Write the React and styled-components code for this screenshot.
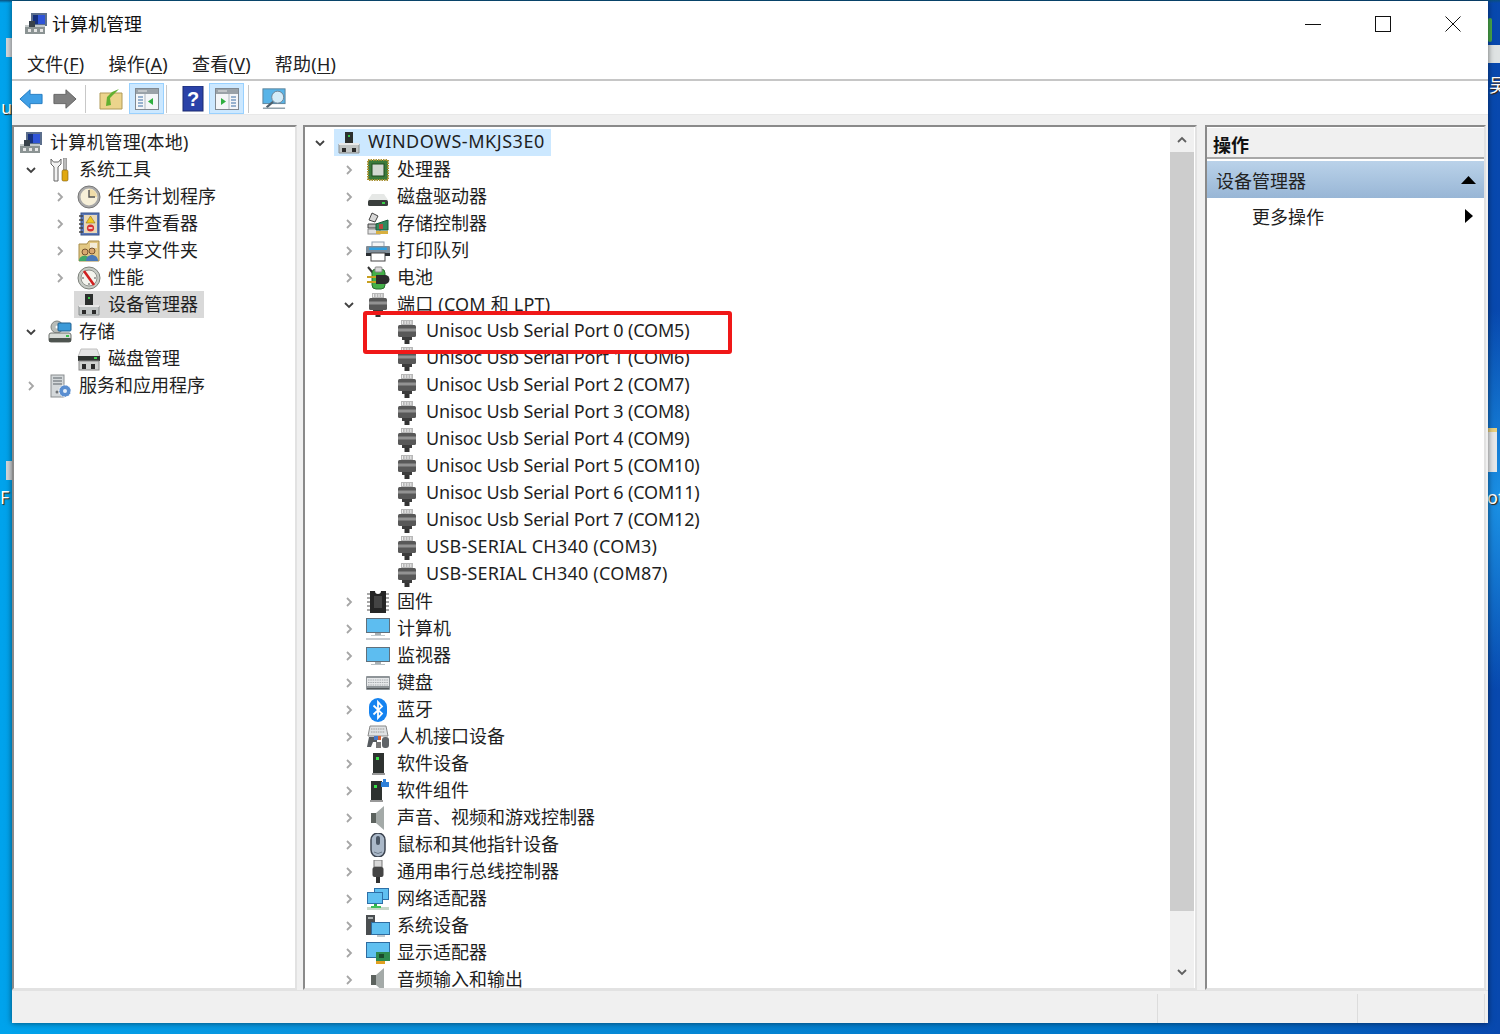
import React from 'react'
import styled, { createGlobalStyle } from 'styled-components'

const Global = createGlobalStyle`
  html, body { margin: 0; height: 100%; overflow: hidden; }
  #root { height: 100%; }
  * { box-sizing: border-box; }
`

const Desktop = styled.div`
  position: relative;
  width: 1500px;
  height: 1034px;
  padding: 1px 0 0 12px;
  overflow: hidden;
  font-family: "Noto Sans", "Noto Sans CJK SC", sans-serif;
  font-size: 18px;
  color: #1f1f1f;
  background:
    radial-gradient(circle 190px at 1510px 500px, #1b93e6 0, rgba(27, 147, 230, 0) 100%),
    linear-gradient(180deg, #0c4f7c 0, rgba(12, 79, 124, 0) 3px),
    linear-gradient(90deg, #00a3ec 0, #0a92dc 330px, #0079cb 1100px, #0848ae 1500px);
`

// bits of desktop icons that stick out from behind the window
const DeskTile = styled.div`
  position: absolute;
  left: ${p => p.$x}px;
  top: ${p => p.$y}px;
  width: ${p => p.$w}px;
  height: ${p => p.$h}px;
  background: ${p => p.$bg};
  border-radius: ${p => p.$round || 0}px;
`

const DeskLabel = styled.span`
  position: absolute;
  left: ${p => p.$x}px;
  top: ${p => p.$y}px;
  line-height: 20px;
  font-size: 18px;
  color: #fff;
  text-shadow: 1px 1px 1px #402000;
`

const Window = styled.div`
  position: relative;
  width: 1476px;
  height: 1022px;
  display: flex;
  flex-direction: column;
  background: #f0f0f0;
  box-shadow: 0 0 6px rgba(0, 0, 0, 0.55);
`

const TitleBar = styled.div`
  height: 45px;
  flex: none;
  display: flex;
  align-items: center;
  padding-left: 12px;
  background: #fff;
`

const TitleText = styled.span`
  margin-left: 4px;
  padding-bottom: 2px;
  flex: 1;
  color: #111;
`

const WinButton = styled.div`
  width: 70px;
  height: 45px;
  display: flex;
  align-items: center;
  justify-content: center;
`

const MenuBar = styled.div`
  height: 35px;
  flex: none;
  display: flex;
  align-items: center;
  gap: 24px;
  padding-left: 15px;
  background: #fff;
  border-bottom: 2px solid #c6c6c6;
`

const MenuItem = styled.span`
  color: #222;
  letter-spacing: 0.25px;
  u { text-underline-offset: 2px; }
`

const ToolBar = styled.div`
  height: 34px;
  flex: none;
  display: flex;
  align-items: flex-end;
  padding-left: 6px;
  background: #fff;
  border-bottom: 1px solid #e8e8e8;
`

const ToolButton = styled.div`
  width: ${p => p.$w || 26}px;
  height: 31px;
  margin-right: ${p => p.$mr || 0}px;
  display: flex;
  align-items: center;
  justify-content: center;
  background: ${p => (p.$active ? '#cce8ff' : 'transparent')};
  border: 1px solid ${p => (p.$active ? '#99d1ff' : 'transparent')};
`

const ToolSep = styled.div`
  width: 1px;
  height: 28px;
  margin: 0 ${p => p.$after}px 1px ${p => p.$before}px;
  background: #c8c8c8;
`

const Panes = styled.div`
  flex: 1;
  min-height: 0;
  display: flex;
  margin-top: 10px;
`

const Pane = styled.div`
  width: ${p => p.$w}px;
  margin-right: ${p => p.$gap || 0}px;
  display: flex;
  background: #fff;
  border-top: 2px solid #8a8a8a;
  border-left: 2px solid #8a8a8a;
  border-right: 2px solid #e2e2e2;
  border-bottom: 2px solid #e2e2e2;
  position: relative;
`

const Tree = styled.div`
  flex: 1;
  min-width: 0;
  padding-top: 2px;
  overflow: hidden;
`

const Row = styled.div`
  height: 27px;
  display: flex;
  align-items: center;
  padding-left: ${p => p.$indent}px;
  white-space: nowrap;
`

const Chevron = styled.div`
  width: 14px;
  height: 14px;
  margin-right: 10px;
  flex: none;
  display: flex;
  align-items: center;
  justify-content: center;
`

const RowBody = styled.div`
  height: 27px;
  display: flex;
  align-items: center;
  gap: 7px;
  margin-left: -3px;
  padding: 0 6px 0 3px;
  background: ${p => p.$selected || 'transparent'};
`

const RowLabel = styled.span`
  padding-bottom: 4px;
  letter-spacing: ${p => p.$track}px;
`

const IconSlot = styled.div`
  width: 24px;
  height: 24px;
  flex: none;
`

const ScrollBar = styled.div`
  width: 24px;
  margin-right: 1px;
  flex: none;
  display: flex;
  flex-direction: column;
  background: #f0f0f0;
`

const ScrollArrow = styled.div`
  height: ${p => p.$h}px;
  flex: none;
  display: flex;
  align-items: center;
  justify-content: center;
`

const ScrollThumb = styled.div`
  height: 759px;
  flex: none;
  background: #cdcdcd;
`

const ScrollRest = styled.div`
  flex: 1;
`

const Marker = styled.div`
  position: absolute;
  left: 58px;
  top: 184px;
  width: 369px;
  height: 43px;
  border: 4px solid #f01818;
  border-radius: 3px;
  pointer-events: none;
`

const ActionsColumn = styled.div`
  flex: 1;
  display: flex;
  flex-direction: column;
`

const ActionsHead = styled.div`
  height: 31px;
  margin-top: 1px;
  display: flex;
  align-items: center;
  padding: 2px 0 0 6px;
  font-weight: 700;
  color: #111;
  background: #f0f0f0;
  border-bottom: 2px solid #a8a8a8;
`

const ActionsGroup = styled.div`
  height: 37px;
  margin-top: 2px;
  display: flex;
  align-items: center;
  justify-content: space-between;
  padding: 0 8px 0 9px;
  color: #222;
  background: linear-gradient(180deg, #bad2e9 0, #98b6d6 100%);
`

const ActionsItem = styled.div`
  height: 36px;
  display: flex;
  align-items: center;
  justify-content: space-between;
  padding: 0 11px 0 45px;
`

const StatusBar = styled.div`
  height: 33px;
  flex: none;
  display: flex;
  justify-content: flex-end;
  background: #f0f0f0;
  border-top: 1px solid #e2e2e2;
  padding: 3px 3px 0 0;
`

const StatusCell = styled.div`
  width: ${p => p.$w}px;
  border-left: 1px solid #dcdcdc;
  border-right: ${p => (p.$last ? '1px solid #dcdcdc' : 'none')};
`

const Svg = ({ children, size = 24 }) => (
  <svg width={size} height={size} viewBox="0 0 24 24">{children}</svg>
)

// tree and toolbar icons, all on a 24 unit grid
const icons = {
  mgmt: <>
    <rect x="7" y="1" width="16" height="13" fill="#5c6f8c" />
    <rect x="9" y="3" width="12" height="9" fill="#2f54d8" />
    <rect x="9" y="3" width="5" height="9" fill="#15307e" />
    <rect x="1" y="13" width="20" height="9" fill="#8b9393" />
    <rect x="1" y="13" width="20" height="2" fill="#c4caca" />
    <rect x="5" y="9" width="6" height="6" fill="#39424a" />
    <rect x="4" y="17" width="3" height="3" fill="#e6e6e6" />
    <rect x="10" y="17" width="3" height="3" fill="#e6e6e6" />
    <rect x="16" y="17" width="3" height="3" fill="#e6e6e6" />
  </>,
  tools: <>
    <path d="M3 1 v5 l3 3 v14 h4 V9 l3-3 V1 l-2.5 3 h-5z" fill="#f2f2f2" stroke="#666" />
    <rect x="15.5" y="0" width="3" height="12" fill="#bbb" stroke="#777" strokeWidth=".6" />
    <rect x="14" y="12" width="6" height="11" rx="1.5" fill="#e0a810" stroke="#7a5a10" strokeWidth=".6" />
  </>,
  clock: <>
    <circle cx="12" cy="12" r="11" fill="#a8a8a8" stroke="#777" />
    <circle cx="12" cy="12" r="8.5" fill="#f6efd8" />
    <path d="M12 12 V4 A8 8 0 0 1 20 12z" fill="#efdca8" />
    <path d="M12 5 V12 H18" fill="none" stroke="#555" strokeWidth="1.4" />
  </>,
  log: <>
    <rect x="4" y="1" width="18" height="22" fill="#5a78b8" stroke="#34508a" />
    <rect x="7" y="3" width="13" height="18" fill="#e8d8b8" />
    <path d="M2 4h4M2 8h4M2 12h4M2 16h4M2 20h4" stroke="#444" strokeWidth="1.4" />
    <path d="M13.5 4 L18 11 H9z" fill="#f0c820" stroke="#806010" strokeWidth=".5" />
    <circle cx="13.5" cy="16" r="3.6" fill="#d83030" />
    <rect x="11.5" y="15.3" width="4" height="1.4" fill="#fff" />
  </>,
  share: <>
    <path d="M2 5 h8 l2-3 h10 v20 H2z" fill="#e3c884" stroke="#a88c48" />
    <rect x="13" y="4" width="7" height="5" fill="#f4ecd8" />
    <circle cx="8" cy="13" r="3" fill="#d8a870" stroke="#5a3a20" strokeWidth=".8" />
    <path d="M2 22 c0-7 11-7 11 0z" fill="#40a868" />
    <circle cx="15" cy="12" r="3" fill="#d8a870" stroke="#5a3a20" strokeWidth=".8" />
    <path d="M9 22 c0-8 12-8 12 0z" fill="#4878b8" />
  </>,
  perf: <>
    <circle cx="12" cy="12" r="11" fill="#c6cac4" stroke="#7c807a" />
    <circle cx="12" cy="12" r="8" fill="#f4f4ee" stroke="#90948e" />
    <path d="M7 5 L17 19" stroke="#d02020" strokeWidth="2.6" />
    <path d="M5 12h2M17 12h2M12 19v-2" stroke="#555" strokeWidth="1" />
  </>,
  device: <>
    <rect x="8" y="1" width="8" height="11" fill="#2c2f2e" />
    <rect x="11" y="4" width="2" height="2" fill="#38c848" />
    <path d="M2 13 h20 v9 H2z" fill="#c0c4c4" stroke="#8a8e8e" />
    <rect x="2" y="12" width="20" height="2" fill="#e8e8e8" />
    <rect x="5" y="17" width="4" height="4" fill="#2a2a2a" />
    <rect x="15" y="17" width="4" height="4" fill="#2a2a2a" />
  </>,
  storage: <>
    <circle cx="9" cy="7" r="6" fill="#b8bcb8" stroke="#808480" />
    <circle cx="9" cy="7" r="1.5" fill="#fff" />
    <rect x="10" y="3" width="13" height="8" rx="1" fill="#3c9ad8" stroke="#206090" />
    <rect x="1" y="13" width="22" height="9" rx="2" fill="#d8dcd8" stroke="#6c706c" />
    <rect x="1" y="18" width="22" height="4" rx="1" fill="#4e5450" />
    <rect x="18" y="15" width="3" height="2" fill="#40c050" />
  </>,
  diskmgmt: <>
    <path d="M4 2 h16 l3 8 H1z" fill="#e4e4e4" stroke="#c0c0c0" />
    <rect x="1" y="9" width="22" height="5" fill="#2e3230" />
    <rect x="17" y="10" width="3" height="2" fill="#40d050" />
    <rect x="2" y="14" width="20" height="9" fill="#d0d2d0" stroke="#888" />
    <rect x="5" y="17" width="4" height="5" fill="#2a2a2a" />
    <rect x="14" y="17" width="4" height="5" fill="#2a2a2a" />
  </>,
  services: <>
    <rect x="3" y="1" width="13" height="22" fill="#d4d8da" stroke="#8a8e90" />
    <path d="M5 4h9M5 7h9M5 10h9" stroke="#5a6268" strokeWidth="1.2" />
    <circle cx="9" cy="18" r="1.5" fill="#707478" />
    <circle cx="17" cy="17" r="6" fill="#5a8ed0" stroke="#fff" strokeWidth="1" strokeDasharray="2 1" />
    <circle cx="17" cy="17" r="2" fill="#e4eef8" />
  </>,
  cpu: <>
    <rect x="2" y="2" width="20" height="20" fill="#3c7a3c" stroke="#a89030" strokeDasharray="1.5 1" strokeWidth="2" />
    <rect x="6" y="6" width="12" height="12" fill="#d4d8d2" stroke="#1e4a1e" />
  </>,
  disk: <>
    <path d="M6 9 h12 l4 6 H2z" fill="#e6e8e6" />
    <rect x="2" y="15" width="20" height="6" rx="1.5" fill="#3a3e3c" />
    <rect x="16" y="17" width="3" height="2" fill="#38d048" />
  </>,
  ctrl: <>
    <path d="M6 1 L12 4 L9 10 L3 8z" fill="#d8d8d8" stroke="#444" />
    <path d="M2 12 h9 v4 H2z" fill="#b8b8b8" stroke="#444" />
    <rect x="2" y="17" width="12" height="5" fill="#e0e0e0" stroke="#888" />
    <path d="M10 12 l12-4 v10 H10z" fill="#2e8a5e" stroke="#1a5a3a" />
    <rect x="13" y="12" width="4" height="5" fill="#b8483c" />
    <rect x="10" y="19" width="12" height="3" fill="#d8b040" />
  </>,
  printer: <>
    <rect x="6" y="3" width="12" height="5" fill="#f4f4f4" stroke="#90a0b0" />
    <rect x="0" y="7" width="24" height="10" rx="1" fill="#7e8c98" />
    <rect x="3" y="8.5" width="18" height="2.5" fill="#30a0e0" />
    <rect x="5" y="14" width="14" height="8" fill="#fff" stroke="#444" />
    <rect x="0" y="14" width="5" height="3" fill="#2a2e32" />
    <rect x="19" y="14" width="5" height="3" fill="#2a2e32" />
  </>,
  battery: <>
    <path d="M2 1 L7 7" stroke="#333" strokeWidth="2" />
    <rect x="6" y="3" width="13" height="20" rx="4" fill="#44b048" stroke="#2a6e2e" />
    <rect x="9" y="1" width="7" height="5" rx="1" fill="#d8d8d8" stroke="#888" />
    <path d="M10 9 h9 a4 4 0 0 1 0 9 h-9z" fill="#2c2c2c" />
    <path d="M1 11 h9 M1 16 h9" stroke="#c8a020" strokeWidth="2" />
  </>,
  port: <>
    <rect x="6" y="0" width="12" height="5" fill="#b8b8b8" />
    <path d="M7.5 1v3M10.2 1v3M13 1v3M15.8 1v3" stroke="#f0f0f0" strokeWidth="1" />
    <rect x="3" y="5" width="18" height="12" rx="1.5" fill="#585858" />
    <rect x="3" y="8.5" width="18" height="3" fill="#929292" />
    <rect x="7" y="17" width="10" height="3" fill="#3c3c3c" />
    <rect x="9.5" y="20" width="5" height="4" fill="#333" />
  </>,
  firmware: <>
    <path d="M4 1 h5 a3 3 0 0 0 6 0 h5 v22 H4z" fill="#252525" />
    <path d="M1 4h3M1 8h3M1 12h3M1 16h3M1 20h3M20 4h3M20 8h3M20 12h3M20 16h3M20 20h3" stroke="#8a8a8a" strokeWidth="1.4" />
    <rect x="8" y="6" width="8" height="12" fill="#444" />
  </>,
  computer: <>
    <rect x="0" y="1" width="24" height="15" fill="#60707c" />
    <rect x="1" y="2" width="22" height="13" fill="#5dbdf0" />
    <rect x="9" y="16" width="6" height="2" fill="#a8b0b4" />
    <rect x="5" y="18" width="14" height="1" fill="#c0c8cc" />
    <rect x="0" y="21" width="24" height="2" fill="#c8ccd0" />
  </>,
  monitor: <>
    <rect x="0" y="3" width="24" height="15" fill="#60707c" />
    <rect x="1" y="4" width="22" height="13" fill="#5dbdf0" />
    <rect x="9" y="18" width="6" height="2" fill="#a8b0b4" />
    <rect x="5" y="20" width="14" height="1" fill="#b8c0c4" />
  </>,
  keyboard: <>
    <rect x="0" y="5" width="24" height="14" rx="1" fill="#8e9498" />
    <rect x="1" y="7" width="22" height="8" fill="#e6e8ea" />
    <path d="M2 9h20M2 11.5h20M2 14h20" stroke="#a8acb0" strokeWidth="1" strokeDasharray="1.5 .8" />
    <rect x="1" y="17" width="22" height="1" fill="#55595c" />
  </>,
  bluetooth: <>
    <rect x="3" y="0" width="18" height="24" rx="9" fill="#1583f0" />
    <path d="M7.5 7.5 L16 15.5 L12 20 V4 L16 8.5 L7.5 16.5" fill="none" stroke="#fff" strokeWidth="1.8" />
  </>,
  hid: <>
    <path d="M4 1 h16 l2 10 H2z" fill="#dfe2e4" stroke="#888" />
    <path d="M5 4h14M5 7h14" stroke="#999" strokeDasharray="1.5 .8" />
    <path d="M1 22 l2-10 h8 v5 h-4 l-2 5z" fill="#555a5e" />
    <rect x="8" y="11" width="5" height="4" fill="#4878c8" />
    <rect x="12" y="11" width="3" height="4" fill="#d86030" />
    <rect x="16" y="12" width="7" height="11" rx="3" fill="#606468" />
    <rect x="10" y="17" width="5" height="6" fill="#777" />
  </>,
  software: <>
    <rect x="7" y="1" width="11" height="21" fill="#2e3230" />
    <rect x="6" y="21" width="13" height="2" fill="#999" />
    <rect x="10" y="5" width="3" height="3" fill="#38e048" />
  </>,
  component: <>
    <rect x="5" y="2" width="11" height="20" fill="#2e3230" />
    <rect x="4" y="21" width="13" height="2" fill="#999" />
    <rect x="8" y="6" width="3" height="3" fill="#38e048" />
    <path d="M17 0 h3 v3 h3 v5 h-8 V3 h2z" fill="#2f80d8" />
  </>,
  speaker: <>
    <path d="M5 7 h5 l8-7 v24 l-8-7 H5z" fill="#a4aaa8" />
    <path d="M5 7 h5 v10 H5z" fill="#5c625e" />
  </>,
  mouse: <>
    <rect x="5" y="0" width="14" height="24" rx="7" fill="#aab8c8" stroke="#3c4450" strokeWidth="1.5" />
    <rect x="10" y="3" width="4" height="9" rx="2" fill="#4a5664" />
    <path d="M8 19 q4 3 8 0" stroke="#6a7888" fill="none" />
  </>,
  usb: <>
    <rect x="8" y="0" width="8" height="7" fill="#d8d8d8" stroke="#777" />
    <rect x="6.5" y="7" width="11" height="10" rx="2" fill="#454545" />
    <rect x="10" y="17" width="4" height="6" fill="#303030" />
  </>,
  network: <>
    <rect x="8" y="1" width="15" height="12" fill="#2e70a8" />
    <rect x="9" y="2" width="13" height="10" fill="#60c0f0" />
    <rect x="1" y="5" width="16" height="12" fill="#2e70a8" />
    <rect x="2" y="6" width="14" height="10" fill="#60c0f0" />
    <rect x="8" y="17" width="3" height="3" fill="#30b048" />
    <rect x="1" y="20" width="22" height="3" fill="#c8d8c8" />
    <rect x="5" y="19" width="10" height="2" fill="#40c058" />
  </>,
  system: <>
    <rect x="0" y="1" width="9" height="20" fill="#4a4e50" />
    <rect x="2" y="3" width="5" height="2" fill="#aab0b0" />
    <rect x="5" y="8" width="19" height="13" fill="#2e6ca0" />
    <rect x="6" y="9" width="17" height="11" fill="#60c0f0" />
    <rect x="11" y="21" width="8" height="2" fill="#c0c8cc" />
  </>,
  display: <>
    <rect x="0" y="1" width="24" height="16" fill="#2e6ca0" />
    <rect x="1" y="2" width="22" height="14" fill="#60c0f0" />
    <rect x="10" y="11" width="14" height="9" fill="#2e8a4e" />
    <rect x="13" y="13" width="5" height="4" fill="#1a4a2a" />
    <rect x="10" y="20" width="9" height="3" fill="#e0a020" />
  </>
}

const NavArrow = ({ color, edge, flip }) => (
  <svg width="26" height="22" viewBox="0 0 26 22">
    <path
      d="M1 11 L12 1 V6 H25 V16 H12 V21z"
      fill={color}
      stroke={edge}
      transform={flip ? 'translate(26 0) scale(-1 1)' : undefined}
    />
  </svg>
)

const PanelGlyph = ({ right }) => (
  <svg width="24" height="22" viewBox="0 0 24 22">
    <rect x="0.5" y="0.5" width="23" height="21" fill="#f4f6f8" stroke="#808890" />
    <rect x="1" y="1" width="22" height="5" fill="#9aa2a8" />
    <path d="M3 3h9" stroke="#e8e8e8" />
    {right
      ? <path d="M6 10 v7 l5-3.5z" fill="#30b040" />
      : <path d="M18 10 v7 l-5-3.5z" fill="#30b040" />}
    <path d={right ? 'M16 9h5M16 12h5M16 15h5M16 18h5' : 'M3 9h5M3 12h5M3 15h5M3 18h5'} stroke="#7a9cc0" strokeWidth="1.4" />
    <path d={right ? 'M14 6v15' : 'M10 6v15'} stroke="#b0b8c0" />
  </svg>
)

const Caret = ({ open }) => (
  <svg width="12" height="12" viewBox="0 0 12 12">
    {open
      ? <path d="M2 4 L6 8 L10 4" fill="none" stroke="#404040" strokeWidth="1.8" />
      : <path d="M4 2 L8 6 L4 10" fill="none" stroke="#a6a6a6" strokeWidth="1.8" />}
  </svg>
)

// Noto's latin runs a bit off the console font, so labels get a little tracking
const trackFor = label => {
  if (label.startsWith('Unisoc')) return -0.17
  if (label.startsWith('USB-')) return 0.22
  if (label.startsWith('WINDOWS')) return 0.53
  return label.includes('(') ? 0.2 : 0
}

const TreeRow = ({ row, base, selected }) => {
  const [level, icon, label, state, mark] = row
  const flat = level === 0 && base === 5
  return (
    <Row $indent={flat ? 5 : base + 29 * (level - (base === 10 ? 1 : 0))}>
      {!flat && (
        <Chevron>{state && <Caret open={state === 'open'} />}</Chevron>
      )}
      <RowBody $selected={mark ? selected : undefined}>
        <IconSlot><Svg>{icons[icon]}</Svg></IconSlot>
        <RowLabel $track={trackFor(label)}>{label}</RowLabel>
      </RowBody>
    </Row>
  )
}

const leftRows = [
  [0, 'mgmt', '计算机管理(本地)'],
  [1, 'tools', '系统工具', 'open'],
  [2, 'clock', '任务计划程序', 'closed'],
  [2, 'log', '事件查看器', 'closed'],
  [2, 'share', '共享文件夹', 'closed'],
  [2, 'perf', '性能', 'closed'],
  [2, 'device', '设备管理器', null, true],
  [1, 'storage', '存储', 'open'],
  [2, 'diskmgmt', '磁盘管理'],
  [1, 'services', '服务和应用程序', 'closed']
]

const ports = [
  'Unisoc Usb Serial Port 0 (COM5)',
  'Unisoc Usb Serial Port 1 (COM6)',
  'Unisoc Usb Serial Port 2 (COM7)',
  'Unisoc Usb Serial Port 3 (COM8)',
  'Unisoc Usb Serial Port 4 (COM9)',
  'Unisoc Usb Serial Port 5 (COM10)',
  'Unisoc Usb Serial Port 6 (COM11)',
  'Unisoc Usb Serial Port 7 (COM12)',
  'USB-SERIAL CH340 (COM3)',
  'USB-SERIAL CH340 (COM87)'
]

const midRows = [
  [0, 'device', 'WINDOWS-MKJS3E0', 'open', true],
  [1, 'cpu', '处理器', 'closed'],
  [1, 'disk', '磁盘驱动器', 'closed'],
  [1, 'ctrl', '存储控制器', 'closed'],
  [1, 'printer', '打印队列', 'closed'],
  [1, 'battery', '电池', 'closed'],
  [1, 'port', '端口 (COM 和 LPT)', 'open'],
  ...ports.map(name => [2, 'port', name]),
  [1, 'firmware', '固件', 'closed'],
  [1, 'computer', '计算机', 'closed'],
  [1, 'monitor', '监视器', 'closed'],
  [1, 'keyboard', '键盘', 'closed'],
  [1, 'bluetooth', '蓝牙', 'closed'],
  [1, 'hid', '人机接口设备', 'closed'],
  [1, 'software', '软件设备', 'closed'],
  [1, 'component', '软件组件', 'closed'],
  [1, 'speaker', '声音、视频和游戏控制器', 'closed'],
  [1, 'mouse', '鼠标和其他指针设备', 'closed'],
  [1, 'usb', '通用串行总线控制器', 'closed'],
  [1, 'network', '网络适配器', 'closed'],
  [1, 'system', '系统设备', 'closed'],
  [1, 'display', '显示适配器', 'closed'],
  [1, 'speaker', '音频输入和输出', 'closed']
]

const menus = [['文件', 'F'], ['操作', 'A'], ['查看', 'V'], ['帮助', 'H']]

export default function App() {
  return (
    <Desktop>
      <Global />
      <DeskTile $x={6} $y={38} $w={6} $h={19} $bg="#d4d8dc" />
      <DeskTile $x={6} $y={461} $w={6} $h={19} $bg="#d4d8dc" />
      <DeskLabel $x={1} $y={97}>u</DeskLabel>
      <DeskLabel $x={0} $y={487}>F</DeskLabel>
      <DeskTile $x={1488} $y={18} $w={4} $h={24} $bg="#4aa84a" $round={2} />
      <DeskTile $x={1488} $y={45} $w={12} $h={18} $bg="#dfe3e3" />
      <DeskLabel $x={1489} $y={75}>吴</DeskLabel>
      <DeskTile $x={1488} $y={428} $w={9} $h={4} $bg="#e8d080" />
      <DeskTile $x={1488} $y={432} $w={9} $h={40} $bg="#e6e8ea" />
      <DeskLabel $x={1487} $y={487}>ot</DeskLabel>

      <Window>
        <TitleBar>
          <IconSlot><Svg>{icons.mgmt}</Svg></IconSlot>
          <TitleText>计算机管理</TitleText>
          <WinButton>
            <svg width="16" height="16"><path d="M0 8.5H16" stroke="#111" /></svg>
          </WinButton>
          <WinButton>
            <svg width="16" height="16"><rect x=".5" y=".5" width="15" height="15" fill="none" stroke="#111" /></svg>
          </WinButton>
          <WinButton>
            <svg width="16" height="16"><path d="M.5 .5L15.5 15.5M15.5 .5L.5 15.5" stroke="#111" /></svg>
          </WinButton>
        </TitleBar>

        <MenuBar>
          {menus.map(([name, key]) => (
            <MenuItem key={key}>{name}(<u>{key}</u>)</MenuItem>
          ))}
        </MenuBar>

        <ToolBar>
          <ToolButton $mr={8}><NavArrow color="#3f9fe6" edge="#1e78c0" /></ToolButton>
          <ToolButton><NavArrow color="#808080" edge="#606060" flip /></ToolButton>
          <ToolSep $before={7} $after={12} />
          <ToolButton $w={26} $mr={5}>
            <svg width="24" height="22" viewBox="0 0 24 22">
              <path d="M1 5 h22 v16 H1z" fill="#ecd48c" stroke="#b09a58" />
              <path d="M7 18 L8 9 L13 4 L20 1 L14 7 L11 10 L12 17z" fill="#62b030" />
            </svg>
          </ToolButton>
          <ToolButton $w={35} $active><PanelGlyph /></ToolButton>
          <ToolSep $before={2} $after={12} />
          <ToolButton $w={28} $mr={2}>
            <svg width="22" height="26" viewBox="0 0 22 26">
              <rect width="20" height="25" x="1" fill="#2a42a8" stroke="#1a2a70" />
              <text x="11" y="20" textAnchor="middle" fontFamily="Liberation Sans" fontWeight="700" fontSize="20" fill="#fff">?</text>
            </svg>
          </ToolButton>
          <ToolButton $w={35} $active><PanelGlyph right /></ToolButton>
          <ToolSep $before={4} $after={12} />
          <ToolButton>
            <svg width="26" height="24" viewBox="0 0 26 24">
              <rect x="1" y="1" width="24" height="16" fill="#58b4e8" stroke="#5a8098" />
              <circle cx="17" cy="10" r="6.5" fill="#d4ecf8" stroke="#708090" />
              <path d="M12 15 L5 21" stroke="#50606c" strokeWidth="2.4" />
              <path d="M1 22 H25" stroke="#90a0aa" strokeWidth="1.6" />
            </svg>
          </ToolButton>
        </ToolBar>

        <Panes>
          <Pane $w={285} $gap={6}>
            <Tree>
              {leftRows.map(row => (
                <TreeRow key={row[2]} row={row} base={row[0] === 0 ? 5 : 10} selected="#d9d9d9" />
              ))}
            </Tree>
          </Pane>

          <Pane $w={894} $gap={8}>
            <Tree>
              {midRows.map(row => (
                <TreeRow key={row[2]} row={row} base={8} selected="#cce8ff" />
              ))}
            </Tree>
            <ScrollBar>
              <ScrollArrow $h={25}>
                <svg width="12" height="12" viewBox="0 0 12 12"><path d="M2 8 L6 4 L10 8" fill="none" stroke="#606060" strokeWidth="1.8" /></svg>
              </ScrollArrow>
              <ScrollThumb />
              <ScrollRest />
              <ScrollArrow $h={32}>
                <svg width="12" height="12" viewBox="0 0 12 12"><path d="M2 4 L6 8 L10 4" fill="none" stroke="#606060" strokeWidth="1.8" /></svg>
              </ScrollArrow>
            </ScrollBar>
            <Marker />
          </Pane>

          <Pane $w={281}>
            <ActionsColumn>
              <ActionsHead>操作</ActionsHead>
              <ActionsGroup>
                设备管理器
                <svg width="15" height="8"><path d="M0 8 L7.5 0 L15 8z" fill="#000" /></svg>
              </ActionsGroup>
              <ActionsItem>
                更多操作
                <svg width="8" height="14"><path d="M0 0 L8 7 L0 14z" fill="#000" /></svg>
              </ActionsItem>
            </ActionsColumn>
          </Pane>
        </Panes>

        <StatusBar>
          <StatusCell $w={200} />
          <StatusCell $w={128} $last />
        </StatusBar>
      </Window>
    </Desktop>
  )
}
